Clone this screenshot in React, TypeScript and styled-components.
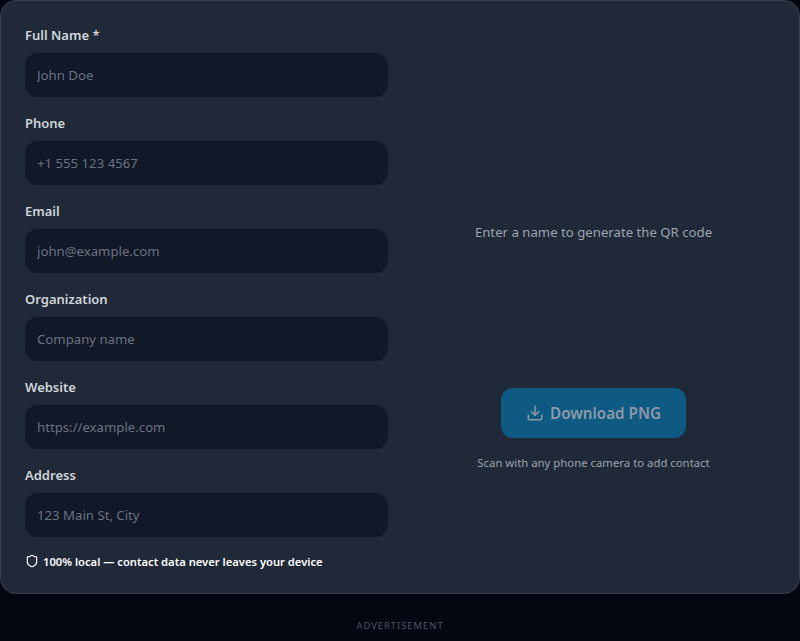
import { createGlobalStyle } from "styled-components"
import styled from "styled-components"

const GlobalStyle = createGlobalStyle`
  html, body {
    margin: 0;
    padding: 0;
    background: #030712;
    font-family: "Noto Sans", "Open Sans", sans-serif;
  }
  * {
    box-sizing: border-box;
  }
`

const Page = styled.div`
  width: 800px;
  height: 641px;
  overflow: hidden;
  display: flex;
  flex-direction: column;
`

const Card = styled.section`
  height: 594px;
  padding: 24px;
  display: grid;
  grid-template-columns: 1fr 1fr;
  gap: 24px;
  background: #1f2937;
  border: 1px solid #374151;
  border-radius: 16px;
`

const Form = styled.div`
  display: flex;
  flex-direction: column;
  gap: 16px;
`

const Field = styled.label`
  display: flex;
  flex-direction: column;
  gap: 8px;
`

const FieldLabel = styled.span`
  height: 20px;
  font-size: 13px;
  line-height: 21px;
  font-weight: 600;
  color: #d1d5db;
`

const Input = styled.input`
  width: 100%;
  height: 44px;
  padding: 0 11px 1px;
  border: 1px solid #111827;
  border-radius: 12px;
  outline: none;
  background: #111827;
  color: #f3f4f6;
  font-family: inherit;
  font-size: 13.2px;

  &::placeholder {
    color: #6b7280;
    opacity: 1;
  }
`

const PrivacyNote = styled.p`
  display: flex;
  align-items: center;
  gap: 4px;
  margin: 0;
  height: 18px;
  font-size: 11.2px;
  line-height: 18px;
  font-weight: 600;
  color: #ffffff;
`

const ShieldSvg = styled.svg`
  margin-bottom: 2px;
`

const PreviewColumn = styled.div`
  display: flex;
  flex-direction: column;
  align-items: center;
  padding-top: 96px;
`

const Placeholder = styled.div`
  height: 222px;
  display: flex;
  align-items: center;
  justify-content: center;
  font-size: 13.2px;
  color: #9ca3af;
`

const DownloadButton = styled.button`
  display: flex;
  align-items: center;
  justify-content: center;
  gap: 6px;
  width: 185px;
  height: 50px;
  margin-top: 45px;
  border: none;
  border-radius: 12px;
  background: #0f5a82;
  color: #8d99a8;
  font-family: inherit;
  font-size: 15.2px;
  font-weight: 600;
`

const ScanHint = styled.p`
  margin: 16px 0 0;
  font-size: 11.35px;
  line-height: 18px;
  color: #9ca3af;
`

const AdLabel = styled.div`
  margin-top: 25px;
  text-align: center;
  font-size: 9.4px;
  line-height: 14px;
  letter-spacing: 1px;
  color: #4b5563;
`

const fields = [
  { label: "Full Name *", placeholder: "John Doe" },
  { label: "Phone", placeholder: "+1 555 123 4567" },
  { label: "Email", placeholder: "john@example.com" },
  { label: "Organization", placeholder: "Company name" },
  { label: "Website", placeholder: "https://example.com" },
  { label: "Address", placeholder: "123 Main St, City" },
]

const ShieldIcon = () => (
  <ShieldSvg width="14" height="14" viewBox="0 0 24 24" fill="none" stroke="currentColor" strokeWidth="2" strokeLinecap="round" strokeLinejoin="round">
    <path d="M20 13c0 5-3.5 7.5-7.66 8.95a1 1 0 0 1-.67-.01C7.5 20.5 4 18 4 13V6a1 1 0 0 1 1-1c2 0 4.5-1.2 6.24-2.72a1.17 1.17 0 0 1 1.52 0C14.51 3.81 17 5 19 5a1 1 0 0 1 1 1z" />
  </ShieldSvg>
)

const DownloadIcon = () => (
  <svg width="18" height="18" viewBox="0 0 24 24" fill="none" stroke="currentColor" strokeWidth="2" strokeLinecap="round" strokeLinejoin="round">
    <path d="M21 15v4a2 2 0 0 1-2 2H5a2 2 0 0 1-2-2v-4" />
    <polyline points="7 10 12 15 17 10" />
    <line x1="12" y1="15" x2="12" y2="3" />
  </svg>
)

export default function App() {
  return (
    <Page>
      <GlobalStyle />
      <Card>
        <Form>
          {fields.map((field) => (
            <Field key={field.label}>
              <FieldLabel>{field.label}</FieldLabel>
              <Input placeholder={field.placeholder} />
            </Field>
          ))}
          <PrivacyNote>
            <ShieldIcon />
            100% local — contact data never leaves your device
          </PrivacyNote>
        </Form>
        <PreviewColumn>
          <Placeholder>Enter a name to generate the QR code</Placeholder>
          <DownloadButton disabled>
            <DownloadIcon />
            Download PNG
          </DownloadButton>
          <ScanHint>Scan with any phone camera to add contact</ScanHint>
        </PreviewColumn>
      </Card>
      <AdLabel>ADVERTISEMENT</AdLabel>
    </Page>
  )
}
